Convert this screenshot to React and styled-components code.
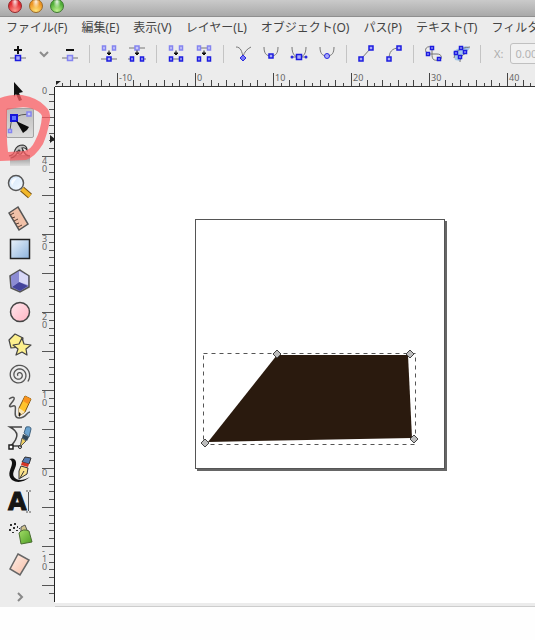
import styled, { createGlobalStyle } from "styled-components";

const GlobalStyle = createGlobalStyle`
  body {
    margin: 0;
    background: #fefefe;
    font-family: "Noto Sans", "Noto Sans CJK JP", sans-serif;
  }
`

const Window = styled.div`
  display: flex;
  flex-direction: column;
  overflow: hidden;
  background: #ececec;
  color: #444;
`

const TitleBar = styled.header`
  display: flex;
  align-items: flex-start;
  gap: 7px;
  height: 16px;
  padding-left: 8px;
  overflow: hidden;
  background: linear-gradient(#cacaca, #a9a9a9);
  border-bottom: 1px solid #8f8f8f;
`

const WindowButton = styled.button`
  flex: none;
  width: 14px;
  height: 14px;
  margin-top: -1px;
  padding: 0;
  border: 1px solid ${ ({$edge}) => $edge};
  border-radius: 50%;
  background:
    radial-gradient(ellipse at 50% 15%, #ffffffe0 0, #ffffff00 45%),
    radial-gradient(circle at 50% 90%, ${ ({$glow}) => $glow} 0, ${ ({$color}) => $color} 65%);
`

const MenuBar = styled.nav`
  display: flex;
  align-items: center;
  gap: 14px;
  height: 22px;
  padding-left: 6px;
  overflow: hidden;
`

const MenuButton = styled.button`
  flex: none;
  padding: 0;
  border: 0;
  background: none;
  color: #444;
  font: inherit;
  font-size: 12px;
  line-height: 18px;
  white-space: nowrap;
`

const ToolBar = styled.div`
  display: flex;
  align-items: center;
  height: 29px;
  padding: 0 0 4px 4px;
  overflow: hidden;
`

const IconButton = styled.button`
  display: flex;
  flex: none;
  align-items: center;
  justify-content: center;
  width: ${ ({$narrow}) => $narrow ? 24 : 28}px;
  height: 28px;
  padding: 0;
  border: 0;
  background: none;

  svg {
    flex: none;
  }
`

const Separator = styled.span`
  flex: none;
  width: 1px;
  height: 18px;
  margin: 0 5px;
  background: #c4c4c4;
`

const CoordLabel = styled.label`
  flex: none;
  margin: 0 7px 0 8px;
  color: #adadad;
  font-size: 11px;
`

const CoordInput = styled.input`
  flex: none;
  box-sizing: border-box;
  width: 64px;
  height: 21px;
  padding: 0 4px;
  border: 1px solid #c0c0c0;
  border-radius: 3px;
  background: #f1f1f1;
  color: #b4b4b4;
  font: inherit;
  font-size: 11px;
`

const Workspace = styled.main`
  position: relative;
  display: grid;
  grid-template-columns: 42px 13px minmax(0, 1fr);
`

const ToolBox = styled.div`
  display: flex;
  flex-direction: column;
  padding: 4px 2px 0 0;
`

const ToolSlot = styled.div`
  display: flex;
  flex: 1;
  align-items: center;
  justify-content: center;
`

const ToolButton = styled.button`
  display: flex;
  align-items: center;
  justify-content: center;
  box-sizing: border-box;
  width: 28px;
  height: 30px;
  padding: 0;
  border: 1px solid ${ ({$active}) => $active ? "#a2a2a2" : "transparent"};
  border-radius: 2px;
  background: ${ ({$active}) => $active ? "linear-gradient(#bdbdbd, #dcdcdc)" : "none"};

  svg {
    flex: none;
    overflow: visible;
  }
`

const MoreButton = styled(ToolButton)`
  align-self: center;
  height: 27px;
  padding-top: 6px;
`

const SideRuler = styled.div`
  padding-top: 15px;
`

const Stage = styled.div`
  display: flex;
  flex-direction: column;
  min-width: 0;
`

const Drawing = styled.svg`
  display: block;
  width: 100%;
  height: ${ ({$height}) => $height}px;
  background: ${ ({$bg}) => $bg || "none"};
`

const RulerText = styled.text`
  fill: #666;
  font-size: 9px;
`

const ScrollStrip = styled.div`
  height: 3px;
  border-bottom: 1px solid #cdcdcd;
`

const Marker = styled.svg`
  position: absolute;
  top: 22px;
  left: 0;
  pointer-events: none;
`

const UNIT = 7.8

const menus = ["ファイル(F)", "編集(E)", "表示(V)", "レイヤー(L)", "オブジェクト(O)", "パス(P)", "テキスト(T)", "フィルター(S)"]

const Knot = ({x, y, s = 4, light, w = 4}) => (
  <rect
    x={x - w / 2}
    y={y - s / 2}
    width={w}
    height={s}
    fill={light ? "#c9c9f8" : "#a9a9fa"}
    stroke={light ? "#8484f0" : "#1c1cdf"}
    strokeWidth="1.5"
  />
)

const Line = ({d, color = "#777", w = 1}) => (
  <path d={d} fill="none" stroke={color} strokeWidth={w} />
)

const DownArrow = () => <path d="M10 6.500v4M8 9h4l-2 2z" stroke="#111" strokeWidth="1" fill="#111" />

const nodeTools = [
  [
    ["ノードを追加", <><Line d="M2 14H18" /><Knot x={10} y={14} s={5} w={5} /><Line d="M10 2v8M6 6h8" color="#111" w={2} /></>],
    ["追加メニュー", <Line d="M6 8l4 4 4-4" color="#8c8c8c" w={2} />],
    ["ノードを削除", <><Line d="M2 14H18" /><Knot x={10} y={14} s={5} w={5} light /><Line d="M6 6h8" color="#111" w={2} /></>],
  ],
  [
    ["ノードを連結", <><Knot x={5} y={4} w={3} light /><Knot x={15} y={4} w={3} light /><Line d="M2 15H18" /><Knot x={10} y={15} /><DownArrow /></>],
    ["ノードを切断", <><Line d="M2 4H18" /><Knot x={10} y={4} light /><Line d="M1 15h4M15 15h4" /><Knot x={5} y={15} w={3} /><Knot x={15} y={15} w={3} /><DownArrow /></>],
  ],
  [
    ["セグメントで連結", <><Knot x={5} y={4} w={3} light /><Knot x={15} y={4} w={3} light /><Line d="M5 15H15" /><Knot x={5} y={15} w={3} /><Knot x={15} y={15} w={3} /><DownArrow /></>],
    ["セグメントを削除", <><Line d="M5 4H15" /><Knot x={5} y={4} w={3} light /><Knot x={15} y={4} w={3} light /><Knot x={5} y={15} w={3} /><Knot x={15} y={15} w={3} /><DownArrow /></>],
  ],
  [
    ["シャープ", <><Line d="M3 3c5 0 6 5 7 10 1-5 4-8 8-10" /><path d="M10 11l3 3-3 3-3-3z" fill="#7878f5" stroke="#2929df" /></>],
    ["スムーズ", <><Line d="M3 3c0 6 2 9 7 9s7-3 7-9" /><Knot x={10} y={12} /></>],
    ["対称", <><Line d="M3 3c0 6 2 10 7 10s7-4 7-10M3 13h14" /><Knot x={10} y={13} s={5} w={5} /><circle cx="3" cy="13" r="1.500" fill="#2929df" /><circle cx="17" cy="13" r="1.500" fill="#2929df" /></>],
    ["自動スムーズ", <><Line d="M3 3c0 6 2 9 7 9s7-3 7-9" /><circle cx="10" cy="12" r="2.500" fill="#a9a9fa" stroke="#2929df" /></>],
  ],
  [
    ["直線にする", <><Line d="M5 15L15 4" /><Knot x={5} y={15} /><Knot x={15} y={4} /></>],
    ["曲線にする", <><Line d="M5 15C5 8 8 4 15 4" /><Knot x={5} y={15} /><Knot x={15} y={4} /></>],
  ],
  [
    ["オブジェクトをパスに", <><Line d="M9 3C1 1 1 9 6 10h8c6 0 5 6 2 6-6 1-7-1-7-6z" /><Knot x={9} y={4} s={3} w={3} /><Knot x={5} y={10} s={3} w={3} /><Knot x={16} y={15} s={3} w={3} /></>],
    ["ストロークをパスに", <><path d="M2 8l4-3 9-3 4 2-4 5-4 2-2 6-5-1z" fill="#a5c8ea" /><Line d="M3 14c1-7 6-10 16-11M9 18c0-5 3-8 7-9" /><Knot x={10} y={4} s={3} w={3} /><Knot x={5} y={9} s={3} w={3} /><Knot x={14} y={8} s={3} w={3} /><Knot x={9} y={13} s={3} w={3} /></>],
  ],
]

const spiral = () => {
  const points = []
  for (let i = 0; i <= 90; i++) {
    const angle = -5.2 * Math.PI + (i / 90) * 5.4 * Math.PI
    const r = 1 + (i / 90) * 10
    points.push(`${12 + r * Math.cos(angle)},${13 + r * Math.sin(angle)}`)
  }
  return points.join(" ")
}

const tools = [
  ["選択", <path d="M7 3L16 13 12 14 15 21 12 22 9 15 7 18z" fill="#111" />],
  ["ノード", <>
    <Line d="M3 20Q3 12 7 7.500 14 4 22 4" color="#555" />
    <Knot x={3} y={21} s={3} w={3} light />
    <Knot x={22} y={4} light />
    <rect x="4" y="5" width="6" height="6" fill="#5d73ff" stroke="#1616d8" strokeWidth="2" />
    <path d="M9 11L22 17 20 20 16 23z" fill="#0c0c0c" />
  </>],
  ["微調整", <>
    <rect x="3" y="13" width="20" height="11" fill="url(#fade)" />
    <path d="M2 14Q7 13 8 8 10 3 16 3 20 4 20 8 18 5 15 6 17 9 14 12 11 13 10 10 12 11 13 9 12 7 11 9 9 15 4 16M16 8Q18 14 23 14" fill="#aaa" fillOpacity="0.6" stroke="#333" strokeWidth="1.200" />
  </>],
  ["ズーム", <>
    <path d="M15 16L23 23" stroke="#775316" strokeWidth="6" />
    <path d="M15 16L23 23" stroke="#f3b829" strokeWidth="4" />
    <circle cx="9" cy="10" r="7.500" fill="url(#lens)" stroke="#555" strokeWidth="1.500" />
    <path d="M4 9Q5 5 10 5 6 10 5 13z" fill="#fff" opacity="0.8" />
  </>],
  ["計測", <>
    <path d="M2 8L11 2 21 19 12 25z" fill="#f1c1a8" stroke="#555" strokeWidth="1.500" />
    <Line d="M3 10l4-2M5 13l3-1M7 16l4-2M9 19l3-1M11 22l4-2" color="#5b4034" />
  </>],
  ["矩形", <rect x="3.500" y="3.500" width="19" height="19" fill="url(#blue)" stroke="#222" strokeWidth="1.500" />],
  ["3D ボックス", <>
    <path d="M13 2L22 8 22 19 13 24 4 20 3 8z" fill="#9a9ad9" stroke="#555" strokeWidth="1.500" />
    <path d="M12 3L21 8 21 17 12 14z" fill="#d9d9f7" />
    <path d="M12 14L21 18 13 23 5 19z" fill="#44449c" />
    <path d="M12 3L12 14 5 19 4 8z" fill="#8c8cd4" />
  </>],
  ["円", <circle cx="13" cy="13" r="9.500" fill="url(#pink)" stroke="#444" strokeWidth="1.500" />],
  ["星形", <g stroke="#444" strokeWidth="1.200" fill="#fdf08d" strokeLinejoin="round">
    <path d="M8 3L16 7 14 16 4 17 2 9z" />
    <path d="M15 7L17 13 24 14 19 18 20 24 15 21 9 24 11 18 6 14 12 13z" />
  </g>],
  ["らせん", <polyline points={spiral()} fill="none" stroke="#555" strokeWidth="1.300" />],
  ["鉛筆", <>
    <Line d="M2 5C6 2 9 3 6 7S0 14 6 12 4 24 12 24 19 18 23 18" color="#555" w={1.5} />
    <path d="M12 22L12 14 18 2 24 5 18 18z" fill="#ffc32c" stroke="#7b5310" />
    <path d="M18 2L24 5 21 10 16 7z" fill="#f9931e" />
    <path d="M12 14L18 18 12 22z" fill="#fbe6b0" />
    <path d="M12 18L14 20 12 23z" fill="#111" />
  </>],
  ["ペン", <>
    <Line d="M15 2H3C12 7 12 12 4 21H13" color="#444" w={1.5} />
    <rect x="2" y="20" width="4" height="4" fill="#fff" stroke="#222" strokeWidth="1.500" />
    <circle cx="13" cy="22" r="1.500" fill="#fff" stroke="#222" />
    <path d="M17 8L19 2Q24 1 24 4L22 12z" fill="#6ba3cf" stroke="#42637f" />
    <path d="M16 9L22 12 20 16 15 13z" fill="#2f4759" />
    <path d="M15 13L19 16 13 22z" fill="#eed063" stroke="#555" />
  </>],
  ["カリグラフィ", <>
    <path d="M2 2Q8 0 9 5C10 11 4 15 7 20Q12 26 23 20 13 28 5 23C-1 17 5 11 5 6Q5 3 2 2z" fill="#111" />
    <path d="M15 5L18 0 24 1 22 7z" fill="#5579af" stroke="#333" />
    <path d="M15 5L22 7 21 10 14 8z" fill="#d53525" />
    <path d="M14 9L21 11 20 17 12 22 12 14z" fill="#fae18b" stroke="#333" />
    <Line d="M13 21L17 14" color="#333" />
  </>],
  ["テキスト", <>
    <text x="1" y="22" fontFamily="DejaVu Sans" fontWeight="700" fontSize="24" fill="#151515" stroke="#151515">A</text>
    <Line d="M19 3h2M22 3h2M19 24h2M22 24h2M21.500 4v19" color="#555" />
  </>],
  ["スプレー", <>
    <path d="M3 4h2v2H3zM7 3h2v2H7zM6 7h2v2H6zM2 9h2v2H2zM10 6h1v2h-1zM9 10h2v1H9zM5 12h2v1H5zM12 8h1v1h-1z" fill="#333" />
    <path d="M14 7L18 5 20 10 14 12z" fill="#cfc38c" stroke="#555" />
    <path d="M12 13Q16 8 22 11L25 22 14 24z" fill="url(#green)" stroke="#4b6d32" />
  </>],
  ["消しゴム", <path d="M11 3L22 9 13 24 3 18z" fill="url(#rubber)" stroke="#666" strokeWidth="1.500" />],
]

const Gradient = ({id, from, to}) => (
  <linearGradient id={id} x1="0" y1="0" x2="1" y2="1">
    <stop stopColor={from} />
    <stop offset="1" stopColor={to} />
  </linearGradient>
)

const Defs = () => (
  <defs>
    <Gradient id="lens" from="#cfe4fa" to="#f5faff" />
    <Gradient id="blue" from="#eaf2fb" to="#8db3dc" />
    <Gradient id="pink" from="#ffe9ee" to="#ffb3c2" />
    <Gradient id="green" from="#a3de67" to="#4c9c24" />
    <Gradient id="rubber" from="#fff1ea" to="#f6bca4" />
    <linearGradient id="fade" x1="0" y1="0" x2="0" y2="1">
      <stop stopColor="#888" />
      <stop offset="1" stopColor="#ddd" />
    </linearGradient>
  </defs>
)

const ZERO_X = 140
const ZERO_Y = 381

// wide enough for any window, the svg clips the rest
const TopRuler = () => (
  <Drawing $height={15} aria-hidden="true">
    {Array.from({length: 400}, (_, n) => n - 17).map(n => {
      const x = Math.round(ZERO_X + n * UNIT)
      const length = n % 10 === 0 ? 13 : n % 2 === 0 ? 6 : 3
      return <rect key={n} x={x} y={14 - length} width="1" height={length} fill="#444" />
    })}
    {Array.from({length: 40}, (_, n) => n - 1).map(n => (
      <RulerText key={n} x={Math.round(ZERO_X + n * 10 * UNIT) + 2} y="9">{n * 10}</RulerText>
    ))}
    <path d="M1 9h5l-5 4z" fill="#222" />
    <rect x="0" y="14" width="100%" height="1" fill="#333" />
  </Drawing>
)

const LeftRuler = () => (
  <Drawing $height={515} aria-hidden="true">
    {Array.from({length: 65}, (_, n) => n - 16).map(n => {
      const length = n % 5 === 0 ? 12 : 5
      return <rect key={n} x={12 - length} y={Math.round(ZERO_Y - n * UNIT)} width={length} height="1" fill="#555" />
    })}
    {[-1, 0, 1, 2, 3, 4].map(n => {
      const top = Math.round(ZERO_Y - n * 10 * UNIT) + 8
      return (
        <RulerText key={n}>
          {String(n * 10).split("").map((c, i) => (
            <tspan key={i} x="0" y={top + i * 8}>{c}</tspan>
          ))}
        </RulerText>
      )
    })}
    <RulerText x="0" y="7">0</RulerText>
    <path d="M8 48l5 4-5 4z" fill="#222" />
    <rect x="12" y="0" width="1" height="515" fill="#222" />
  </Drawing>
)

const handles = [[222, 267], [355, 267], [359, 352], [150, 356]]

const Canvas = () => (
  <Drawing $height={516} $bg="#fff" role="img" aria-label="キャンバス">
    <rect x="142" y="134" width="250" height="250" fill="#666" />
    <rect x="140.500" y="132.500" width="249" height="249" fill="#fff" stroke="#555" />
    <path d="M222 268L353 268 357 351 153 355z" fill="#2a1a0e" />
    <rect x="148.500" y="266.500" width="212" height="91" fill="none" stroke="#555" strokeDasharray="4 4" />
    {handles.map(([x, y]) => (
      <path key={`${x}-${y}`} d={`M${x - 4} ${y}l4-4 4 4-4 4z`} fill="#bdbdbd" stroke="#444" />
    ))}
  </Drawing>
)

const App = () => {
  return (
    <>
      <GlobalStyle />
      <Window>
        <TitleBar>
          <WindowButton aria-label="閉じる" $color="#e02a30" $glow="#ff9b90" $edge="#94282b" />
          <WindowButton aria-label="しまう" $color="#ee9420" $glow="#ffe47a" $edge="#9c6a26" />
          <WindowButton aria-label="拡大" $color="#4fae36" $glow="#c1f391" $edge="#3f7831" />
        </TitleBar>
        <MenuBar>
          {menus.map(menu => <MenuButton key={menu}>{menu}</MenuButton>)}
        </MenuBar>
        <ToolBar>
          {nodeTools.map((group, i) => [
            ...group.map(([label, icon]) => (
              <IconButton key={label} aria-label={label} $narrow={label === "追加メニュー"}>
                <svg width="20" height="20" viewBox="0 0 20 20">{icon}</svg>
              </IconButton>
            )),
            <Separator key={i} />,
          ])}
          <CoordLabel htmlFor="coord-x">X:</CoordLabel>
          <CoordInput id="coord-x" defaultValue="0.000" disabled />
        </ToolBar>
        <Workspace>
          <ToolBox>
            {tools.map(([label, icon]) => (
              <ToolSlot key={label}>
                <ToolButton aria-label={label} $active={label === "ノード"}>
                  <svg width="26" height="26" viewBox="0 0 26 26">
                    <Defs />
                    {icon}
                  </svg>
                </ToolButton>
              </ToolSlot>
            ))}
            <MoreButton aria-label="その他">
              <svg width="10" height="10" viewBox="0 0 10 10"><Line d="M3 1l4 4-4 4" color="#888" w={2} /></svg>
            </MoreButton>
          </ToolBox>
          <SideRuler><LeftRuler /></SideRuler>
          <Stage>
            <TopRuler />
            <Canvas />
            <ScrollStrip />
          </Stage>
          <Marker width="54" height="70" viewBox="0 92 54 70" aria-hidden="true">
            <path
              d="M0 96Q12 92 22 93 38 96 45 104 51 109 50 118 47 133 43 142 35 155 26 158L0 159zM7 108Q6 135 8 150L24 149Q31 148 35 139 41 128 42 114 40 109 30 106 20 104 7 108z"
              fill="#fb5f64"
              fillOpacity="0.75"
              fillRule="evenodd"
            />
          </Marker>
        </Workspace>
      </Window>
    </>
  );
}

export default App;
